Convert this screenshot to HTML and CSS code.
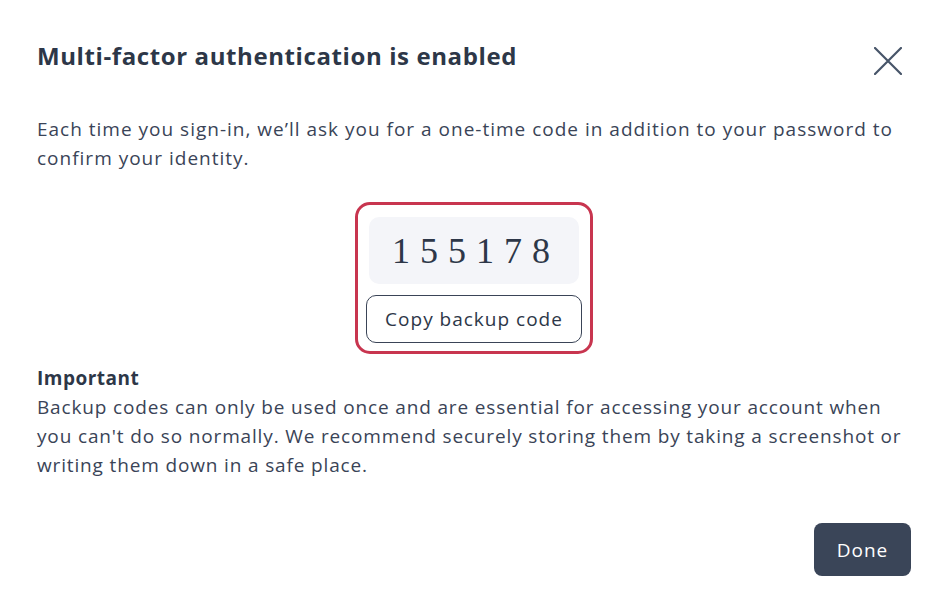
FILE: index.html
```html
<!DOCTYPE html>
<html>
<head>
<meta charset="utf-8">
<link rel="stylesheet" href="styles.css">
</head>
<body>
<div class="modal">
  <div class="header">
    <h1 class="title">Multi-factor authentication is enabled</h1>
    <button class="close" aria-label="Close">
      <svg width="28" height="28" viewBox="0 0 28 28"><path d="M1 1L27 27M27 1L1 27" stroke="#475569" stroke-width="2.2" stroke-linecap="round" fill="none"/></svg>
    </button>
  </div>
  <p class="intro">Each time you sign-in, we’ll ask you for a one-time code in addition to your password to confirm your identity.</p>
  <div class="code-wrap">
    <div class="highlight">
      <div class="code">155178</div>
      <button class="copy">Copy backup code</button>
    </div>
  </div>
  <div class="important">
    <div class="imp-title">Important</div>
    <p class="imp-text">Backup codes can only be used once and are essential for accessing your account when you can't do so normally. We recommend securely storing them by taking a screenshot or writing them down in a safe place.</p>
  </div>
  <div class="footer">
    <button class="done">Done</button>
  </div>
</div>
</body>
</html>
```
FILE: styles.css
```css
* { box-sizing: border-box; }
html, body { margin: 0; padding: 0; background: #fff; }
body {
  font-family: "Open Sans", Lato, sans-serif;
  color: #3a4457;
  width: 948px;
  height: 614px;
  overflow: hidden;
}
.modal { padding: 40px 37px 0 37px; }
.header { display: flex; justify-content: space-between; align-items: flex-start; height: 32px; }
.title {
  margin: 0;
  font-size: 24px;
  line-height: 32px;
  font-weight: 700;
  letter-spacing: 0.6px;
  color: #2d3748;
}
.close {
  border: 0; background: none; padding: 0; margin: 7px 9px 0 0;
  width: 28px; height: 28px; display: flex; cursor: pointer;
}
.intro {
  margin: 43px 0 0 0;
  font-size: 19px;
  line-height: 29px;
  letter-spacing: 1px;
}
.code-wrap { display: flex; justify-content: center; margin-top: 29px; }
.highlight {
  border: 3px solid #c8354f;
  border-radius: 15px;
  padding: 12px 8px 8px 8px;
  display: flex; flex-direction: column; align-items: center; gap: 11px;
  width: 238px;
}
.code {
  width: 210px; height: 67px;
  background: #f4f5f9;
  border-radius: 10px;
  font-family: "Liberation Serif", "DejaVu Serif", serif;
  font-size: 36px;
  letter-spacing: 10px;
  text-indent: 4px;
  color: #2d3748;
  display: flex; align-items: center; justify-content: center;
}
.copy {
  width: 216px; height: 48px;
  border: 1px solid #3a4457;
  border-radius: 10px;
  background: #fff;
  font-family: inherit;
  font-size: 19px;
  letter-spacing: 1px;
  color: #2d3748;
  padding: 0;
}
.important { margin-top: 10px; font-size: 19px; line-height: 29px; letter-spacing: 0.85px; }
.imp-title { font-weight: 700; color: #2d3748; letter-spacing: 0.5px; }
.imp-text { margin: 0; }
.footer { display: flex; justify-content: flex-end; margin-top: 43px; }
.done {
  width: 97px; height: 53px;
  background: #3a4558;
  color: #fff;
  border: 0;
  border-radius: 8px;
  font-family: inherit;
  font-size: 19px;
  letter-spacing: 1px;
  padding: 0;
}
```
